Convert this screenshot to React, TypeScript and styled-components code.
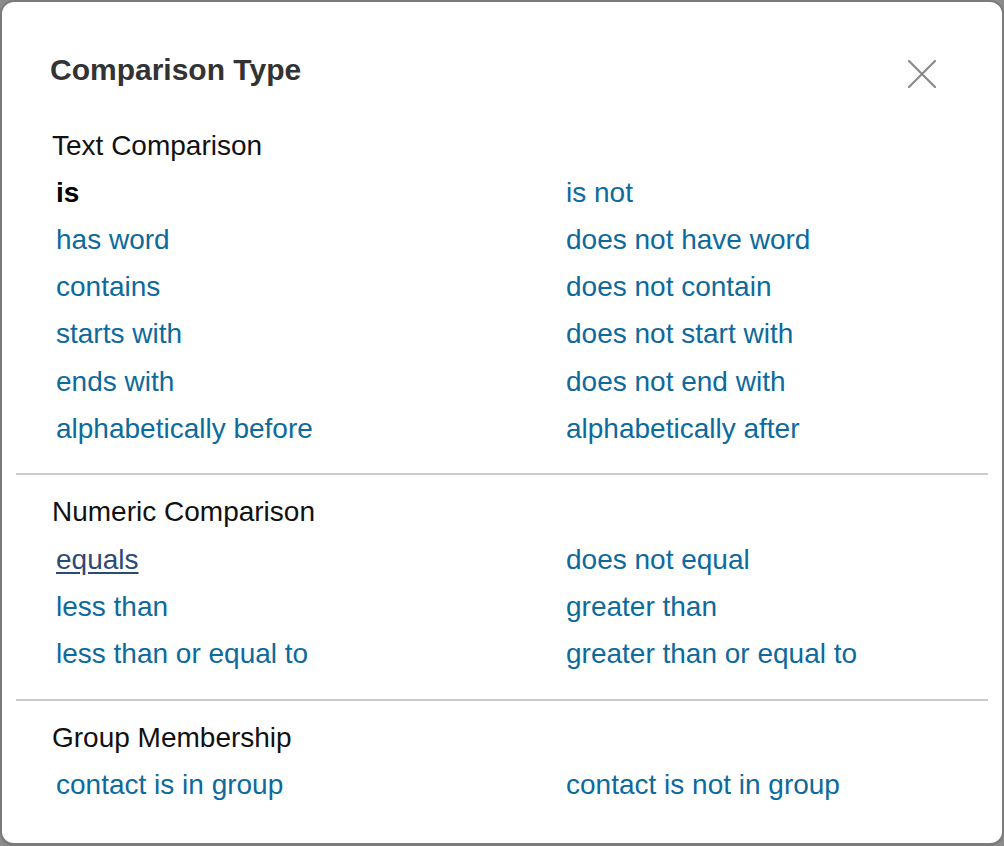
import React, { useState } from "react";
import styled, { createGlobalStyle, css } from "styled-components";

const GlobalStyle = createGlobalStyle`
  html, body {
    margin: 0;
    padding: 0;
    background: #8c8c8c;
  }
  body {
    font-family: "Liberation Sans", Arial, sans-serif;
  }
`;

type Section = {
  title: string;
  options: string[];
};

const sections: Section[] = [
  {
    title: "Text Comparison",
    options: [
      "is",
      "is not",
      "has word",
      "does not have word",
      "contains",
      "does not contain",
      "starts with",
      "does not start with",
      "ends with",
      "does not end with",
      "alphabetically before",
      "alphabetically after",
    ],
  },
  {
    title: "Numeric Comparison",
    options: [
      "equals",
      "does not equal",
      "less than",
      "greater than",
      "less than or equal to",
      "greater than or equal to",
    ],
  },
  {
    title: "Group Membership",
    options: ["contact is in group", "contact is not in group"],
  },
];

const CloseIcon = () => (
  <svg width="28" height="28" viewBox="0 0 28 28" fill="none">
    <path
      d="M1 1L27 27M27 1L1 27"
      stroke="#8a8a8a"
      strokeWidth="2.2"
      strokeLinecap="round"
    />
  </svg>
);

const App = () => {
  const [selected, setSelected] = useState("is");

  return (
    <>
      <GlobalStyle />
      <Dialog>
        <Header>
          <Title>Comparison Type</Title>
          <CloseButton aria-label="Close">
            <CloseIcon />
          </CloseButton>
        </Header>
        {sections.map((section) => (
          <Group key={section.title}>
            <GroupTitle>{section.title}</GroupTitle>
            <Options>
              {section.options.map((option) => (
                <Option
                  key={option}
                  href="#"
                  $selected={option === selected}
                  $visited={option === "equals"}
                  onClick={(e) => {
                    e.preventDefault();
                    setSelected(option);
                  }}
                >
                  {option}
                </Option>
              ))}
            </Options>
          </Group>
        ))}
      </Dialog>
    </>
  );
};

const Dialog = styled.div`
  box-sizing: border-box;
  width: 1004px;
  height: 846px;
  background: #fff;
  border: 2px solid #7b7b7b;
  border-bottom-width: 3px;
  border-radius: 14px;
  padding-top: 50px;
  overflow: hidden;
`;

const Header = styled.div`
  display: flex;
  justify-content: space-between;
  align-items: flex-start;
  padding: 0 66px 0 48px;
  margin-bottom: 20.5px;
`;

const Title = styled.h2`
  margin: 0;
  font-size: 30px;
  line-height: 36px;
  font-weight: 700;
  color: #333;
`;

const CloseButton = styled.button`
  margin-top: 8px;
  padding: 0;
  width: 28px;
  height: 28px;
  border: none;
  background: none;
  cursor: pointer;
  display: flex;
`;

const Group = styled.section`
  margin: 0 14px;
  padding: 13px 36px 21.5px;
  border-bottom: 2px solid #cbcbcb;

  &:last-of-type {
    border-bottom: none;
  }
`;

const GroupTitle = styled.h3`
  margin: 0;
  font-size: 28px;
  line-height: 47.2px;
  font-weight: 400;
  color: #111;
`;

const Options = styled.div`
  display: grid;
  grid-template-columns: 510px 1fr;
`;

const Option = styled.a<{ $selected: boolean; $visited: boolean }>`
  display: block;
  padding-left: 4px;
  font-size: 28px;
  line-height: 47.2px;
  color: #0d6a9c;
  text-decoration: none;
  white-space: nowrap;

  ${({ $visited }) =>
    $visited &&
    css`
      color: #2d4a75;
      text-decoration: underline;
      text-underline-offset: 3px;
    `}

  ${({ $selected }) =>
    $selected &&
    css`
      color: #000;
      font-weight: 700;
      text-decoration: none;
    `}
`;

export default App;
